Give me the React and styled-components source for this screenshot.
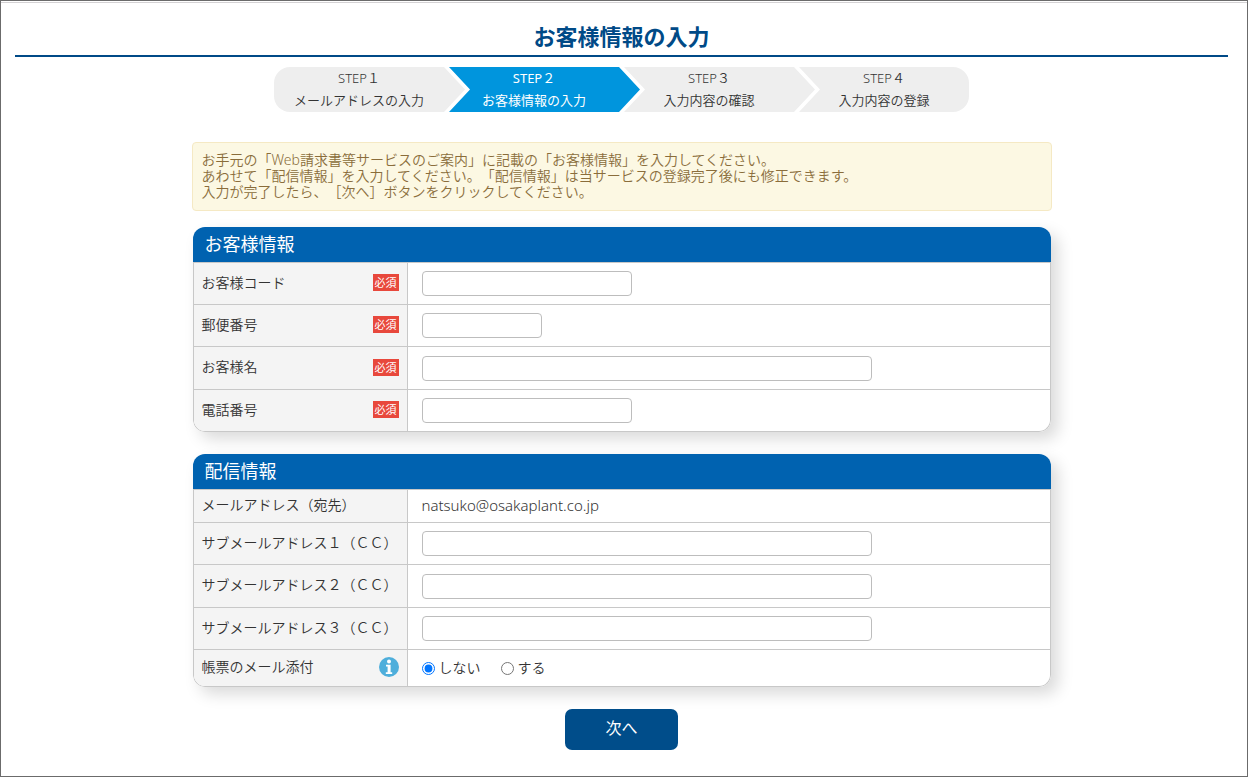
import React, { useState } from 'react';
import styled, { createGlobalStyle } from 'styled-components';

const GlobalStyle = createGlobalStyle`
    * {
        box-sizing: border-box;
    }
    body {
        margin: 0;
        background-color: white;
        color: #333;
        font-family: "Noto Sans", "Noto Sans CJK JP", sans-serif;
        font-size: 14px;
        font-weight: 350;
        line-height: 16px;
        text-spacing-trim: space-all;
    }
    input, button {
        font-family: inherit;
        font-weight: inherit;
    }
`;

const Page = styled.div`
    min-height: 100vh;
    border: 1px solid #6b6b6b;
`;

const Content = styled.div`
    border-top: 1px solid white;
    box-shadow: inset 0 1px 0 #d4d2d4;
    padding: 18px 19px 26px 14px;
`;

const Title = styled.h1`
    margin: 0;
    padding-bottom: 3px;
    border-bottom: 2px solid #004a87;
    color: #004a87;
    font-size: 22px;
    line-height: 32px;
    font-weight: bold;
    text-align: center;
`;

const Steps = styled.ol`
    display: grid;
    grid-template-columns: repeat(4, 170px);
    column-gap: 5px;
    justify-content: center;
    margin: 10px 0 30px;
    padding: 0;
    list-style: none;
`;

const Step = styled.li`
    height: 45px;
    margin-right: -21px;
    padding-right: 21px;
    background-color: ${({ $active }) => ($active ? '#0095dd' : '#eeeeee')};
    color: ${({ $active }) => ($active ? 'white' : '#333')};
    font-size: 13px;
    font-weight: ${({ $active }) => ($active ? 400 : 'inherit')};
    line-height: 22px;
    text-align: center;
    clip-path: polygon(0 0, calc(100% - 21px) 0, 100% 50%, calc(100% - 21px) 100%, 0 100%, 21px 50%);

    &:first-child {
        border-radius: 16px 0 0 16px;
        clip-path: polygon(0 0, calc(100% - 21px) 0, 100% 50%, calc(100% - 21px) 100%, 0 100%);
    }
    &:last-child {
        margin-right: 0;
        padding-right: 0;
        border-radius: 0 16px 16px 0;
        clip-path: polygon(0 0, 100% 0, 100% 100%, 0 100%, 21px 50%);
    }
`;

const StepLine = styled.span`
    display: block;
`;

const Form = styled.form`
    max-width: 860px;
    margin: 0 auto;
`;

const Notice = styled.p`
    margin: 0 0 16px;
    padding: 9px 9px 10px;
    border: 1px solid #f5e9c4;
    border-radius: 4px;
    background-color: #fcf8e3;
    color: #8a6d3b;
`;

const Panel = styled.section`
    margin: 0 1px 22px;
    border-radius: 12px;
    background-color: white;
    box-shadow: 7px 7px 16px rgba(0, 0, 0, 0.15);
    overflow: hidden;
`;

const PanelTitle = styled.h2`
    margin: 0;
    padding: 0 12px;
    background-color: #0062b0;
    color: white;
    font-size: 18px;
    line-height: 35px;
    font-weight: normal;
`;

const Table = styled.table`
    width: 100%;
    border: 1px solid #c8c8c8;
    border-top: none;
    border-radius: 0 0 12px 12px;
    border-spacing: 0;
    table-layout: fixed;

    tr:last-child th {
        border-bottom-left-radius: 11px;
    }
`;

const HeadCell = styled.th`
    width: 214px;
    height: ${({ $height }) => $height}px;
    padding: 0 8px 2px;
    border-top: 1px solid #c8c8c8;
    border-right: 1px solid #c8c8c8;
    background-color: #f4f4f4;
    font-weight: inherit;
    text-align: left;
`;

const HeadInner = styled.div`
    display: flex;
    align-items: center;
    justify-content: space-between;
`;

const Cell = styled.td`
    padding: 0 14px;
    border-top: 1px solid #c8c8c8;
`;

const MailText = styled.span`
    display: block;
    padding-bottom: 2px;
    font-size: 15px;
`;

const Required = styled.span`
    padding: 0 2px;
    background-color: #e8483c;
    color: white;
    font-size: 11px;
    font-weight: normal;
    line-height: 17px;
`;

const TextInput = styled.input`
    display: block;
    width: ${({ $width }) => $width}px;
    max-width: 100%;
    height: 25px;
    padding: 0 6px;
    border: 1px solid #bdbdbd;
    border-radius: 4px;
    background-color: white;
    font-size: 14px;
`;

const InfoButton = styled.button`
    display: flex;
    padding: 0;
    border: none;
    background: none;
    cursor: pointer;
`;

const RadioGroup = styled.div`
    display: flex;
    gap: 20px;
`;

const RadioLabel = styled.label`
    display: flex;
    align-items: center;
    gap: 4px;

    input {
        width: 13px;
        height: 13px;
        margin: 0;
    }
`;

const SubmitButton = styled.button`
    display: block;
    margin: 0 auto;
    padding: 0 40px 2px;
    border: none;
    border-radius: 7px;
    background-color: #004d8a;
    color: white;
    font-size: 16px;
    font-weight: normal;
    line-height: 39px;
    cursor: pointer;
`;

const steps = [
    { no: 'STEP１', name: 'メールアドレスの入力' },
    { no: 'STEP２', name: 'お客様情報の入力' },
    { no: 'STEP３', name: '入力内容の確認' },
    { no: 'STEP４', name: '入力内容の登録' },
];

const customerFields = [
    { id: 'code', label: 'お客様コード', width: 210, height: 42 },
    { id: 'zip', label: '郵便番号', width: 120, height: 42 },
    { id: 'name', label: 'お客様名', width: 450, height: 43 },
    { id: 'tel', label: '電話番号', width: 210, height: 42 },
];

const mailFields = [
    { id: 'cc1', label: 'サブメールアドレス１（ＣＣ）', width: 450, height: 42 },
    { id: 'cc2', label: 'サブメールアドレス２（ＣＣ）', width: 450, height: 43 },
    { id: 'cc3', label: 'サブメールアドレス３（ＣＣ）', width: 450, height: 42 },
];

function FieldRow({ field, required, value, onChange }) {
    return (
        <tr>
            <HeadCell scope="row" $height={field.height}>
                <HeadInner>
                    <label htmlFor={field.id}>{field.label}</label>
                    {required && <Required>必須</Required>}
                </HeadInner>
            </HeadCell>
            <Cell>
                <TextInput
                    id={field.id}
                    type="text"
                    $width={field.width}
                    value={value}
                    onChange={(e) => onChange(field.id, e.target.value)}
                />
            </Cell>
        </tr>
    );
}

function InfoIcon() {
    return (
        <svg width="20" height="20" viewBox="0 0 20 20" aria-hidden="true">
            <circle cx="10" cy="10" r="10" fill="#4eaedb" />
            <circle cx="10" cy="4.4" r="2" fill="white" />
            <path d="M7 7.8h4.6v7.4h1.6v1.8H6.8v-1.8h1.8V9.6H7z" fill="white" />
        </svg>
    );
}

function App() {
    const [values, setValues] = useState({});
    const [attach, setAttach] = useState('no');

    const handleChange = (id, value) => {
        setValues({ ...values, [id]: value });
    };

    return (
        <Page>
            <GlobalStyle />
            <Content>
                <Title>お客様情報の入力</Title>
                <Steps>
                    {steps.map((step, index) => (
                        <Step key={step.no} $active={index === 1}>
                            <StepLine>{step.no}</StepLine>
                            <StepLine>{step.name}</StepLine>
                        </Step>
                    ))}
                </Steps>
                <Form onSubmit={(e) => e.preventDefault()}>
                    <Notice>
                        お手元の「Web請求書等サービスのご案内」に記載の「お客様情報」を入力してください。<br />
                        あわせて「配信情報」を入力してください。「配信情報」は当サービスの登録完了後にも修正できます。<br />
                        入力が完了したら、［次へ］ボタンをクリックしてください。
                    </Notice>
                    <Panel>
                        <PanelTitle>お客様情報</PanelTitle>
                        <Table>
                            <tbody>
                                {customerFields.map((field) => (
                                    <FieldRow
                                        key={field.id}
                                        field={field}
                                        required
                                        value={values[field.id] || ''}
                                        onChange={handleChange}
                                    />
                                ))}
                            </tbody>
                        </Table>
                    </Panel>
                    <Panel>
                        <PanelTitle>配信情報</PanelTitle>
                        <Table>
                            <tbody>
                                <tr>
                                    <HeadCell scope="row" $height={33}>メールアドレス（宛先）</HeadCell>
                                    <Cell><MailText>natsuko@osakaplant.co.jp</MailText></Cell>
                                </tr>
                                {mailFields.map((field) => (
                                    <FieldRow
                                        key={field.id}
                                        field={field}
                                        value={values[field.id] || ''}
                                        onChange={handleChange}
                                    />
                                ))}
                                <tr>
                                    <HeadCell scope="row" $height={37}>
                                        <HeadInner>
                                            <span id="attach-label">帳票のメール添付</span>
                                            <InfoButton type="button" aria-label="ヘルプ">
                                                <InfoIcon />
                                            </InfoButton>
                                        </HeadInner>
                                    </HeadCell>
                                    <Cell>
                                        <RadioGroup role="radiogroup" aria-labelledby="attach-label">
                                            <RadioLabel>
                                                <input
                                                    type="radio"
                                                    name="attach"
                                                    checked={attach === 'no'}
                                                    onChange={() => setAttach('no')}
                                                />
                                                しない
                                            </RadioLabel>
                                            <RadioLabel>
                                                <input
                                                    type="radio"
                                                    name="attach"
                                                    checked={attach === 'yes'}
                                                    onChange={() => setAttach('yes')}
                                                />
                                                する
                                            </RadioLabel>
                                        </RadioGroup>
                                    </Cell>
                                </tr>
                            </tbody>
                        </Table>
                    </Panel>
                    <SubmitButton type="submit">次へ</SubmitButton>
                </Form>
            </Content>
        </Page>
    );
}

export default App;
